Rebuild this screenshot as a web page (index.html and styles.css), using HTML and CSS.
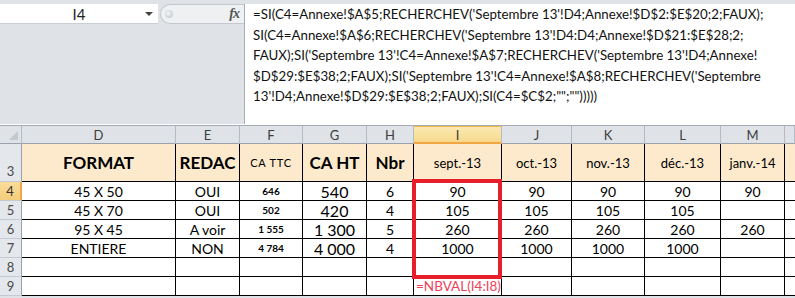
FILE: index.html
```html
<!DOCTYPE html>
<html lang="fr">
<head>
    <meta charset="UTF-8">
    <title>Septembre 13</title>
    <link rel="stylesheet" href="styles.css">
</head>
<body>
    <div class="formula-bar">
        <div class="name-area">
            <div class="name-box">I4<span class="arrow"></span></div>
            <div class="fx-area">
                <span class="grip"></span>
                <span class="fx">fx</span>
            </div>
        </div>
        <div class="formula">
            <div>=SI(C4=Annexe!$A$5;RECHERCHEV('Septembre 13'!D4;Annexe!$D$2:$E$20;2;FAUX);</div>
            <div>SI(C4=Annexe!$A$6;RECHERCHEV('Septembre 13'!D4:D4;Annexe!$D$21:$E$28;2;</div>
            <div>FAUX);SI('Septembre 13'!C4=Annexe!$A$7;RECHERCHEV('Septembre 13'!D4;Annexe!</div>
            <div>$D$29:$E$38;2;FAUX);SI('Septembre 13'!C4=Annexe!$A$8;RECHERCHEV('Septembre</div>
            <div>13'!D4;Annexe!$D$29:$E$38;2;FAUX);SI(C4=$C$2;"";"")))))</div>
        </div>
    </div>

    <div class="sheet">
        <!-- column letters -->
        <div class="corner"><span class="corner-tri"></span></div>
        <div class="col-head">D</div>
        <div class="col-head">E</div>
        <div class="col-head">F</div>
        <div class="col-head">G</div>
        <div class="col-head">H</div>
        <div class="col-head active">I</div>
        <div class="col-head">J</div>
        <div class="col-head">K</div>
        <div class="col-head">L</div>
        <div class="col-head">M</div>
        <div class="col-head last"></div>

        <!-- row 3 -->
        <div class="row-num tall">3</div>
        <div class="cell hd big">FORMAT</div>
        <div class="cell hd big">REDAC</div>
        <div class="cell hd tiny">CA TTC</div>
        <div class="cell hd big">CA HT</div>
        <div class="cell hd big">Nbr</div>
        <div class="cell hd">sept.-13</div>
        <div class="cell hd">oct.-13</div>
        <div class="cell hd">nov.-13</div>
        <div class="cell hd">déc.-13</div>
        <div class="cell hd">janv.-14</div>
        <div class="cell hd last"></div>

        <!-- row 4 -->
        <div class="row-num active">4</div>
        <div class="cell">45 X 50</div>
        <div class="cell">OUI</div>
        <div class="cell small">646</div>
        <div class="cell wide">540</div>
        <div class="cell">6</div>
        <div class="cell">90</div>
        <div class="cell">90</div>
        <div class="cell">90</div>
        <div class="cell">90</div>
        <div class="cell">90</div>
        <div class="cell last"></div>

        <!-- row 5 -->
        <div class="row-num">5</div>
        <div class="cell">45 X 70</div>
        <div class="cell">OUI</div>
        <div class="cell small">502</div>
        <div class="cell wide">420</div>
        <div class="cell">4</div>
        <div class="cell">105</div>
        <div class="cell">105</div>
        <div class="cell">105</div>
        <div class="cell">105</div>
        <div class="cell"></div>
        <div class="cell last"></div>

        <!-- row 6 -->
        <div class="row-num">6</div>
        <div class="cell">95 X 45</div>
        <div class="cell">A voir</div>
        <div class="cell small">1 555</div>
        <div class="cell wide">1 300</div>
        <div class="cell">5</div>
        <div class="cell">260</div>
        <div class="cell">260</div>
        <div class="cell">260</div>
        <div class="cell">260</div>
        <div class="cell">260</div>
        <div class="cell last"></div>

        <!-- row 7 -->
        <div class="row-num">7</div>
        <div class="cell">ENTIERE</div>
        <div class="cell">NON</div>
        <div class="cell small">4 784</div>
        <div class="cell wide">4 000</div>
        <div class="cell">4</div>
        <div class="cell">1000</div>
        <div class="cell">1000</div>
        <div class="cell">1000</div>
        <div class="cell">1000</div>
        <div class="cell"></div>
        <div class="cell last"></div>

        <!-- row 8 -->
        <div class="row-num">8</div>
        <div class="cell"></div>
        <div class="cell"></div>
        <div class="cell"></div>
        <div class="cell"></div>
        <div class="cell"></div>
        <div class="cell"></div>
        <div class="cell"></div>
        <div class="cell"></div>
        <div class="cell"></div>
        <div class="cell"></div>
        <div class="cell last"></div>

        <!-- row 9 -->
        <div class="row-num">9</div>
        <div class="cell"></div>
        <div class="cell"></div>
        <div class="cell"></div>
        <div class="cell"></div>
        <div class="cell"></div>
        <div class="cell note">=NBVAL(I4:I8)</div>
        <div class="cell"></div>
        <div class="cell"></div>
        <div class="cell"></div>
        <div class="cell"></div>
        <div class="cell last"></div>

        <div class="highlight"></div>
    </div>
</body>
</html>
```

FILE: styles.css
```css
*{
    box-sizing: border-box;
}
body{
    margin: 0;
    background-color: #dfe3e8;
    font-family: Lato, "Open Sans", sans-serif;
    overflow: hidden;
}

/* formula bar */
.formula-bar{
    display: flex;
    height: 125px;
    padding-top: 4px;
    border-bottom: 1px solid #ffffff;
}
.name-area{
    width: 244px;
    display: flex;
    align-items: flex-start;
}
.name-box{
    width: 158px;
    height: 20px;
    background-color: #fff;
    border-bottom: 1px solid #c9ced4;
    display: flex;
    align-items: center;
    justify-content: center;
    position: relative;
    font-size: 15px;
    color: #222;
}
.arrow{
    position: absolute;
    right: 5px;
    top: 8px;
    border-left: 4px solid transparent;
    border-right: 4px solid transparent;
    border-top: 4px solid #444;
}
.fx-area{
    flex: 1;
    height: 20px;
    margin-left: 2px;
    background-color: #eef0f2;
    border: 1px solid #c4c9cf;
    border-right: 0;
    border-radius: 10px 0 0 10px;
    display: flex;
    align-items: center;
    justify-content: space-between;
    padding: 0 5px 0 4px;
}
.grip{
    width: 8px;
    height: 8px;
    border-radius: 50%;
    background: radial-gradient(circle at 40% 40%, #f4f5f6, #b9bec4);
}
.fx{
    font-family: "Liberation Serif", serif;
    font-style: italic;
    font-weight: bold;
    font-size: 14px;
    color: #555;
    letter-spacing: -1px;
}
.formula{
    flex: 1;
    background-color: #fff;
    border-left: 1px solid #a6adb5;
    padding: 0 0 0 8px;
    font-size: 13.3px;
    line-height: 20.5px;
    color: #111;
    white-space: nowrap;
    overflow: hidden;
}

/* grid */
.sheet{
    position: relative;
    display: grid;
    grid-template-columns: 22px 154px 64px 63px 64px 47px 88px 70px 73px 76px 64px 1fr;
    grid-template-rows: 18px 38px repeat(6, 19px);
    border-top: 1px solid #a5acb5;
    background-color: #fff;
}
.corner{
    background-color: #dfe3e8;
    border-right: 1px solid #b5bcc5;
    border-bottom: 1px solid #9aa3ad;
    position: relative;
}
.corner-tri{
    position: absolute;
    right: 3px;
    bottom: 3px;
    border-left: 9px solid transparent;
    border-bottom: 9px solid #c3c8ce;
}
.col-head{
    background-color: #dfe3e8;
    border-right: 1px solid #b5bcc5;
    border-bottom: 1px solid #9aa3ad;
    display: flex;
    align-items: center;
    justify-content: center;
    font-size: 13px;
    color: #3c3c3c;
}
.col-head.active{
    background: linear-gradient(#fbe9b0, #f7d98c);
    border-top: 1px solid #f2b64d;
    border-bottom: 2px solid #f2a540;
    color: #3a3a3a;
}
.row-num{
    background-color: #e4e7eb;
    border-right: 1px solid #9aa3ad;
    border-bottom: 1px solid #c4cad1;
    display: flex;
    align-items: center;
    justify-content: center;
    font-size: 13px;
    color: #4a4a4a;
}
.row-num.tall{
    align-items: flex-end;
    padding-bottom: 2px;
}
.row-num.active{
    background: linear-gradient(#f9dd9a, #f5cd7c);
    border-right: 2px solid #f2a540;
    color: #333;
}

.cell{
    border-right: 1px solid #000;
    border-bottom: 1px solid #000;
    display: flex;
    align-items: center;
    justify-content: center;
    font-size: 14px;
    color: #000;
    white-space: nowrap;
}
.cell.hd{
    background-color: #fdeacd;
    font-size: 13px;
}
.cell.big{
    font-size: 17px;
    font-weight: bold;
}
.cell.tiny{
    font-size: 11px;
    letter-spacing: 0.8px;
}
.cell.small{
    font-size: 10px;
    font-weight: bold;
}
.cell.wide{
    font-size: 16px;
}
.cell.last{
    border-right: 0;
}
.cell.note{
    justify-content: flex-start;
    padding-left: 2px;
    color: #ef3e5a;
    font-size: 13.5px;
    overflow: visible;
}

/* red frame drawn over column I */
.highlight{
    position: absolute;
    left: 412px;
    top: 53px;
    width: 90px;
    height: 100px;
    border: 4px solid #e61f2b;
    pointer-events: none;
}
```
